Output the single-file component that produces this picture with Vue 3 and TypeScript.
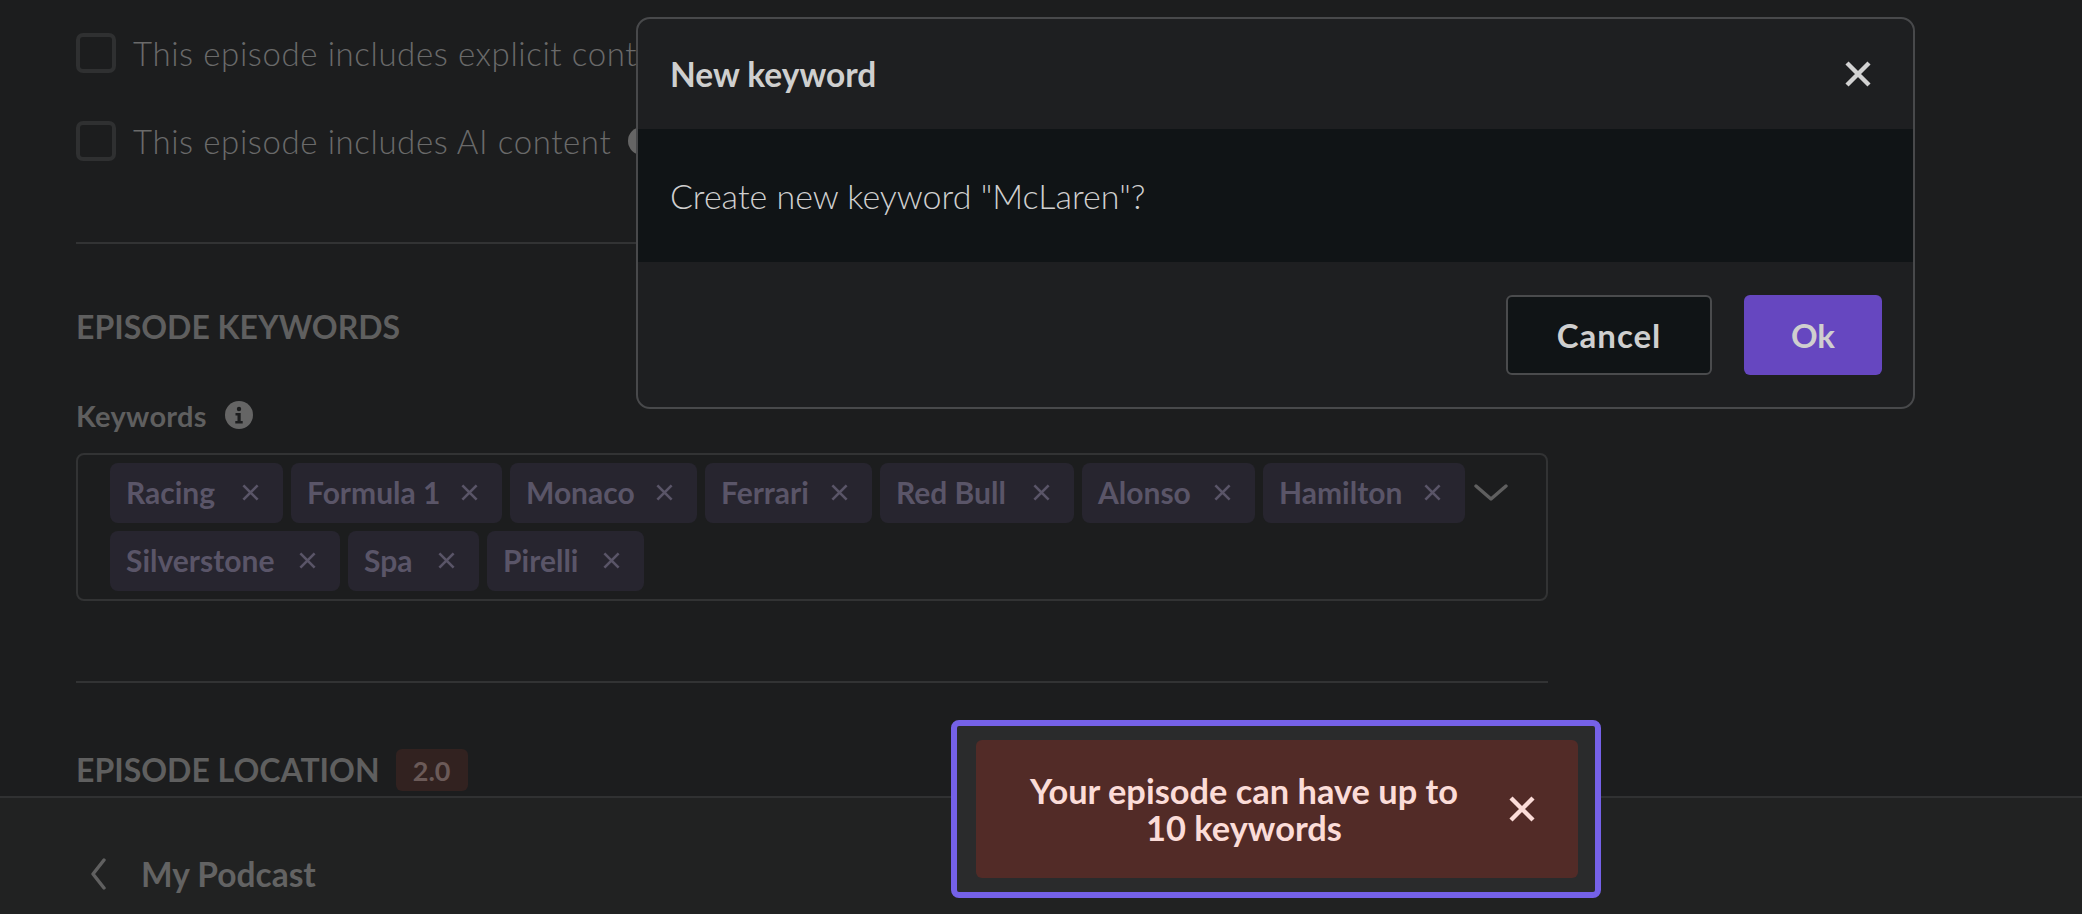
<template>
  <div class="page">
    <main class="content">
      <label v-for="c in checks" :key="c.text" class="check">
        <span class="box"></span>
        <span class="check-text">{{ c.text }}</span>
        <span v-if="c.info" class="check-info"></span>
      </label>
      <hr class="rule first" />
      <h2 class="section keywords-title">Episode keywords</h2>
      <div class="field-label">
        <span>Keywords</span>
        <svg class="info" viewBox="0 0 28 28" aria-hidden="true">
          <circle cx="14" cy="14" r="14" fill="#656565" />
          <circle cx="14" cy="8" r="2.2" fill="#1c1d1e" />
          <path d="M10.5 12h5.2v8h2v2.4h-7.4V20h2.2v-5.6h-2z" fill="#1c1d1e" />
        </svg>
      </div>
      <div class="tag-input">
        <div v-for="(row, i) in tagRows" :key="i" class="tag-row">
          <span v-for="t in row" :key="t.name" class="tag" :style="{ width: t.w + 'px' }">
            <span class="tag-name">{{ t.name }}</span>
            <svg class="tag-x" viewBox="0 0 16 16" aria-hidden="true">
              <path d="M2 2l12 12M14 2L2 14" />
            </svg>
          </span>
          <svg v-if="i === 0" class="chevron" viewBox="0 0 34 20" aria-hidden="true">
            <path d="M2 3l15 13L32 3" />
          </svg>
        </div>
      </div>
      <hr class="rule second" />
      <div class="location">
        <h2 class="section">Episode location</h2>
        <span class="badge">2.0</span>
      </div>
    </main>

    <footer class="footer">
      <svg class="back" viewBox="0 0 16 32" aria-hidden="true">
        <path d="M14 2L3 16l11 14" />
      </svg>
      <span class="podcast">My Podcast</span>
    </footer>

    <section class="modal" role="dialog">
      <header class="modal-head">
        <span>New keyword</span>
        <svg class="modal-x" viewBox="0 0 28 28" aria-hidden="true">
          <path d="M3 3l22 22M25 3L3 25" />
        </svg>
      </header>
      <div class="modal-body">Create new keyword "McLaren"?</div>
      <div class="modal-foot">
        <button class="btn cancel">Cancel</button>
        <button class="btn ok">Ok</button>
      </div>
    </section>

    <div class="toast-ring">
      <div class="toast">
        <p class="toast-text">Your episode can have up to 10 keywords</p>
        <svg class="toast-x" viewBox="0 0 28 28" aria-hidden="true">
          <path d="M3 3l22 22M25 3L3 25" />
        </svg>
      </div>
    </div>
  </div>
</template>

<script setup lang="ts">
const checks = [
  { text: "This episode includes explicit content", info: false },
  { text: "This episode includes AI content", info: true },
];

const tagRows = [
  [
    { name: "Racing", w: 173 },
    { name: "Formula 1", w: 211 },
    { name: "Monaco", w: 187 },
    { name: "Ferrari", w: 167 },
    { name: "Red Bull", w: 194 },
    { name: "Alonso", w: 173 },
    { name: "Hamilton", w: 202 },
  ],
  [
    { name: "Silverstone", w: 230 },
    { name: "Spa", w: 131 },
    { name: "Pirelli", w: 157 },
  ],
];
</script>

<style>
html,
body {
  margin: 0;
  background: #1c1d1e;
}
</style>

<style scoped>
.page {
  position: relative;
  width: 2082px;
  height: 914px;
  overflow: hidden;
  display: flex;
  flex-direction: column;
  font-family: Lato, "Open Sans", sans-serif;
  background: #1c1d1e;
}

.content {
  flex: 1;
  min-height: 0;
  width: 1472px;
  margin-left: 76px;
  padding-top: 33px;
  box-sizing: content-box;
}

.check {
  display: flex;
  align-items: center;
  gap: 17px;
  height: 40px;
  margin-bottom: 48px;
  white-space: nowrap;
}

.box {
  box-sizing: border-box;
  width: 40px;
  height: 40px;
  border: 4px solid #2f3031;
  border-radius: 7px;
}

.check-text {
  font-size: 33px;
  letter-spacing: 0.6px;
  font-weight: 300;
  color: #6a6a6a;
}

.check-info {
  width: 28px;
  height: 28px;
  border-radius: 50%;
  background: #656565;
}

.rule {
  border: 0;
  height: 2px;
  margin: 0;
  background: #323334;
}

.rule.first {
  margin-top: 81px;
}

.rule.second {
  margin-top: 80px;
}

.section {
  margin: 0;
  font-size: 32px;
  line-height: 36px;
  font-weight: 700;
  text-transform: uppercase;
  color: #5f5f5f;
}

.keywords-title {
  margin-top: 65px;
}

.field-label {
  display: flex;
  align-items: center;
  gap: 18px;
  height: 32px;
  margin-top: 54px;
  font-size: 29px;
  letter-spacing: 0.3px;
  font-weight: 700;
  color: #5f5f5f;
}

.info {
  width: 28px;
  height: 28px;
}

.tag-input {
  box-sizing: border-box;
  height: 148px;
  margin-top: 22px;
  padding: 8px 0 0 32px;
  border: 2px solid #323334;
  border-radius: 8px;
  display: flex;
  flex-direction: column;
  gap: 8px;
}

.tag-row {
  display: flex;
  gap: 8px;
}

.tag {
  box-sizing: border-box;
  display: flex;
  align-items: center;
  justify-content: space-between;
  height: 60px;
  padding: 0 23px 2px 16px;
  border-radius: 8px;
  background: #27252f;
  color: #5a5568;
  font-size: 30px;
  font-weight: 700;
  white-space: nowrap;
}

.tag-x {
  width: 19px;
  height: 19px;
  flex: none;
}

.tag-x path {
  fill: none;
  stroke: #5a5568;
  stroke-width: 2.2;
}

.chevron {
  width: 34px;
  height: 20px;
  margin: 20px 0 0 1px;
}

.chevron path {
  fill: none;
  stroke: #5f5f5f;
  stroke-width: 3.4;
  stroke-linecap: round;
  stroke-linejoin: round;
}

.location {
  display: flex;
  align-items: center;
  gap: 16px;
  margin-top: 66px;
}

.badge {
  display: flex;
  align-items: center;
  justify-content: center;
  width: 72px;
  height: 42px;
  border-radius: 6px;
  background: #322220;
  color: #6b5a58;
  font-size: 27px;
  font-weight: 700;
}

.footer {
  box-sizing: border-box;
  flex: none;
  height: 118px;
  display: flex;
  align-items: center;
  gap: 35px;
  padding: 36px 0 0 90px;
  border-top: 2px solid #303132;
  background: #212222;
}

.back {
  width: 16px;
  height: 32px;
}

.back path {
  fill: none;
  stroke: #606060;
  stroke-width: 3.4;
  stroke-linecap: round;
  stroke-linejoin: round;
}

.podcast {
  font-size: 33.5px;
  font-weight: 700;
  color: #636363;
}

.modal {
  position: absolute;
  left: 636px;
  top: 17px;
  box-sizing: border-box;
  width: 1279px;
  height: 392px;
  display: flex;
  flex-direction: column;
  border: 2px solid #48494b;
  border-radius: 14px;
  background: #1e1f21;
  color: #cfcfcf;
}

.modal-head {
  flex: none;
  height: 110px;
  display: flex;
  align-items: center;
  justify-content: space-between;
  padding: 0 41px 0 32px;
  font-size: 33.5px;
  font-weight: 700;
}

.modal-x {
  width: 28px;
  height: 28px;
}

.modal-x path {
  fill: none;
  stroke: #d2d2d2;
  stroke-width: 4.4;
}

.modal-body {
  flex: none;
  height: 133px;
  display: flex;
  align-items: center;
  padding-left: 32px;
  background: #101416;
  font-size: 34px;
  font-weight: 300;
}

.modal-foot {
  flex: 1;
  display: flex;
  align-items: flex-start;
  justify-content: flex-end;
  gap: 32px;
  padding: 33px 31px 0 0;
}

.btn {
  box-sizing: border-box;
  height: 80px;
  border-radius: 6px;
  font-family: inherit;
  font-size: 33px;
  font-weight: 700;
  color: #cfcfcf;
}

.cancel {
  width: 206px;
  border: 2px solid #4a4b4d;
  background: #101416;
  letter-spacing: 1px;
}

.ok {
  width: 138px;
  border: 0;
  background: #6647c0;
}

.toast-ring {
  position: absolute;
  left: 951px;
  top: 720px;
  box-sizing: border-box;
  width: 650px;
  height: 178px;
  padding: 14px 17px 14px 19px;
  border: 6px solid #7561e8;
  border-radius: 8px;
  background: #2a2b2c;
}

.toast {
  height: 100%;
  display: flex;
  align-items: center;
  gap: 35px;
  padding: 0 42px 0 39px;
  box-sizing: border-box;
  border-radius: 6px;
  background: #522b27;
}

.toast-text {
  flex: 1;
  margin: 0;
  text-align: center;
  font-size: 34.4px;
  line-height: 37px;
  font-weight: 700;
  color: #fbdcd8;
}

.toast-x {
  flex: none;
  width: 28px;
  height: 28px;
}

.toast-x path {
  fill: none;
  stroke: #fbdcd8;
  stroke-width: 4.4;
}
</style>
